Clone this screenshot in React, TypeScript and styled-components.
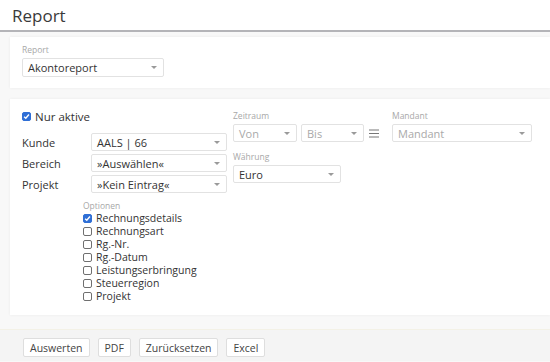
import React from "react";
import styled, { createGlobalStyle } from "styled-components";

const GlobalStyle = createGlobalStyle`
  body {
    margin: 0;
    background: #f8f8f8;
    font-family: "Open Sans", "Liberation Sans", sans-serif;
    color: #333;
  }
`;

// header
const Header = styled.header`
  height: 30px;
  background: #fff;
  border-bottom: 2px solid #b4b4b8;
  padding-left: 12px;
  display: flex;
  align-items: center;
`;

const Title = styled.h1`
  margin: 0;
  font-size: 17px;
  font-weight: 400;
  color: #3a3a3a;
`;

const Main = styled.main`
  padding: 5px 0 0 10px;
  display: flex;
  flex-direction: column;
  gap: 11px;
`;

const Card = styled.section<{ pad: string }>`
  background: #fff;
  box-shadow: 0 0 3px rgba(0, 0, 0, 0.06);
  padding: ${(props) => props.pad};
`;

const SmallLabel = styled.div<{ gap?: number }>`
  font-size: 8.5px;
  line-height: 10px;
  color: #a8a8a8;
  margin-bottom: ${(props) => (props.gap === undefined ? 3 : props.gap)}px;
`;

const SelectBox = styled.div<{ w: number; placeholder?: boolean }>`
  width: ${(props) => props.w}px;
  height: 18px;
  box-sizing: border-box;
  border: 1px solid #e2e2e2;
  border-radius: 2px;
  background: #fff;
  display: flex;
  align-items: center;
  justify-content: space-between;
  padding: 0 6px 0 5px;
  font-size: 11px;
  color: ${(props) => (props.placeholder ? "#a9a9a9" : "#333")};
  flex-shrink: 0;
`;

const Caret = styled.span`
  width: 0;
  height: 0;
  border-left: 3px solid transparent;
  border-right: 3px solid transparent;
  border-top: 3px solid #9a9a9a;
`;

const Select: React.FC<{ w: number; value: string; placeholder?: boolean; h?: number }> = ({
  w,
  value,
  placeholder,
  h,
}) => (
  <SelectBox w={w} placeholder={placeholder} style={h ? { height: h } : undefined}>
    <span>{value}</span>
    <Caret />
  </SelectBox>
);

// checkboxes
const CheckRow = styled.label<{ size: number }>`
  display: flex;
  align-items: center;
  gap: 4px;
  font-size: ${(props) => props.size}px;
  height: 13px;
  line-height: 13px;
  color: #333;
`;

const Box = styled.span<{ checked: boolean }>`
  width: 9px;
  height: 9px;
  box-sizing: border-box;
  border-radius: 2px;
  border: 1px solid ${(props) => (props.checked ? "#2f6fd6" : "#6f6f6f")};
  background: ${(props) => (props.checked ? "#2f6fd6" : "#fff")};
  display: flex;
  align-items: center;
  justify-content: center;
  flex-shrink: 0;
`;

const Check: React.FC<{ checked: boolean; label: string; size?: number }> = ({
  checked,
  label,
  size = 10.5,
}) => (
  <CheckRow size={size}>
    <Box checked={checked}>
      {checked && (
        <svg width="7" height="7" viewBox="0 0 8 8">
          <path d="M1.3 4.2 L3.2 6 L6.8 1.8" stroke="#fff" strokeWidth="1.6" fill="none" />
        </svg>
      )}
    </Box>
    {label}
  </CheckRow>
);

// filter card
const Columns = styled.div`
  display: flex;
  align-items: flex-start;
`;

const LeftCol = styled.div`
  display: flex;
  flex-direction: column;
`;

const FieldGrid = styled.div`
  display: grid;
  grid-template-columns: 69px 136px;
  row-gap: 3px;
  margin-top: 10px;
  align-items: center;
  font-size: 11px;
`;

const Options = styled.div`
  margin: 8px 0 0 61px;
  display: flex;
  flex-direction: column;
`;

const MidCol = styled.div`
  margin-left: 6px;
  display: flex;
  flex-direction: column;
  padding-top: 1px;
`;

const InlineRow = styled.div`
  display: flex;
  align-items: center;
  gap: 4px;
`;

const Group = styled.div<{ top?: number }>`
  margin-top: ${(props) => props.top || 0}px;
`;

const RightCol = styled.div`
  margin-left: 13px;
  padding-top: 1px;
`;

// footer
const Footer = styled.footer`
  margin-top: 14px;
  background: #f4f4f4;
  border-top: 1px solid #f3f1e6;
  padding: 8px 23px 4px;
  display: flex;
  gap: 8px;
`;

const Button = styled.button`
  height: 19px;
  padding: 0 6px;
  background: #fff;
  border: 1px solid #dedede;
  border-radius: 2px;
  font-family: inherit;
  font-size: 10.5px;
  color: #444;
`;

const options = [
  { label: "Rechnungsdetails", checked: true },
  { label: "Rechnungsart", checked: false },
  { label: "Rg.-Nr.", checked: false },
  { label: "Rg.-Datum", checked: false },
  { label: "Leistungserbringung", checked: false },
  { label: "Steuerregion", checked: false },
  { label: "Projekt", checked: false },
];

export default function App() {
  return (
    <>
      <GlobalStyle />
      <Header>
        <Title>Report</Title>
      </Header>
      <Main>
        <Card pad="8px 12px 11px">
          <SmallLabel>Report</SmallLabel>
          <Select w={142} value="Akontoreport" h={19} />
        </Card>
        <Card pad="11px 12px 12px">
          <Columns>
            <LeftCol>
              <Check checked label="Nur aktive" size={11.5} />
              <FieldGrid>
                <span>Kunde</span>
                <Select w={136} value="AALS | 66" />
                <span>Bereich</span>
                <Select w={136} value="»Auswählen«" />
                <span>Projekt</span>
                <Select w={136} value="»Kein Eintrag«" />
              </FieldGrid>
              <Options>
                <SmallLabel gap={1}>Optionen</SmallLabel>
                {options.map((o) => (
                  <Check key={o.label} checked={o.checked} label={o.label} />
                ))}
              </Options>
            </LeftCol>
            <MidCol>
              <Group>
                <SmallLabel>Zeitraum</SmallLabel>
                <InlineRow>
                  <Select w={64} value="Von" placeholder />
                  <Select w={63} value="Bis" placeholder />
                  <svg width="10" height="9" viewBox="0 0 10 9" style={{ marginLeft: 1 }}>
                    <path d="M0 1h10M0 4.5h10M0 8h10" stroke="#777" strokeWidth="1" />
                  </svg>
                </InlineRow>
              </Group>
              <Group top={10}>
                <SmallLabel>Währung</SmallLabel>
                <Select w={108} value="Euro" />
              </Group>
            </MidCol>
            <RightCol>
              <SmallLabel>Mandant</SmallLabel>
              <Select w={140} value="Mandant" placeholder />
            </RightCol>
          </Columns>
        </Card>
      </Main>
      <Footer>
        <Button>Auswerten</Button>
        <Button>PDF</Button>
        <Button>Zurücksetzen</Button>
        <Button>Excel</Button>
      </Footer>
    </>
  );
}
